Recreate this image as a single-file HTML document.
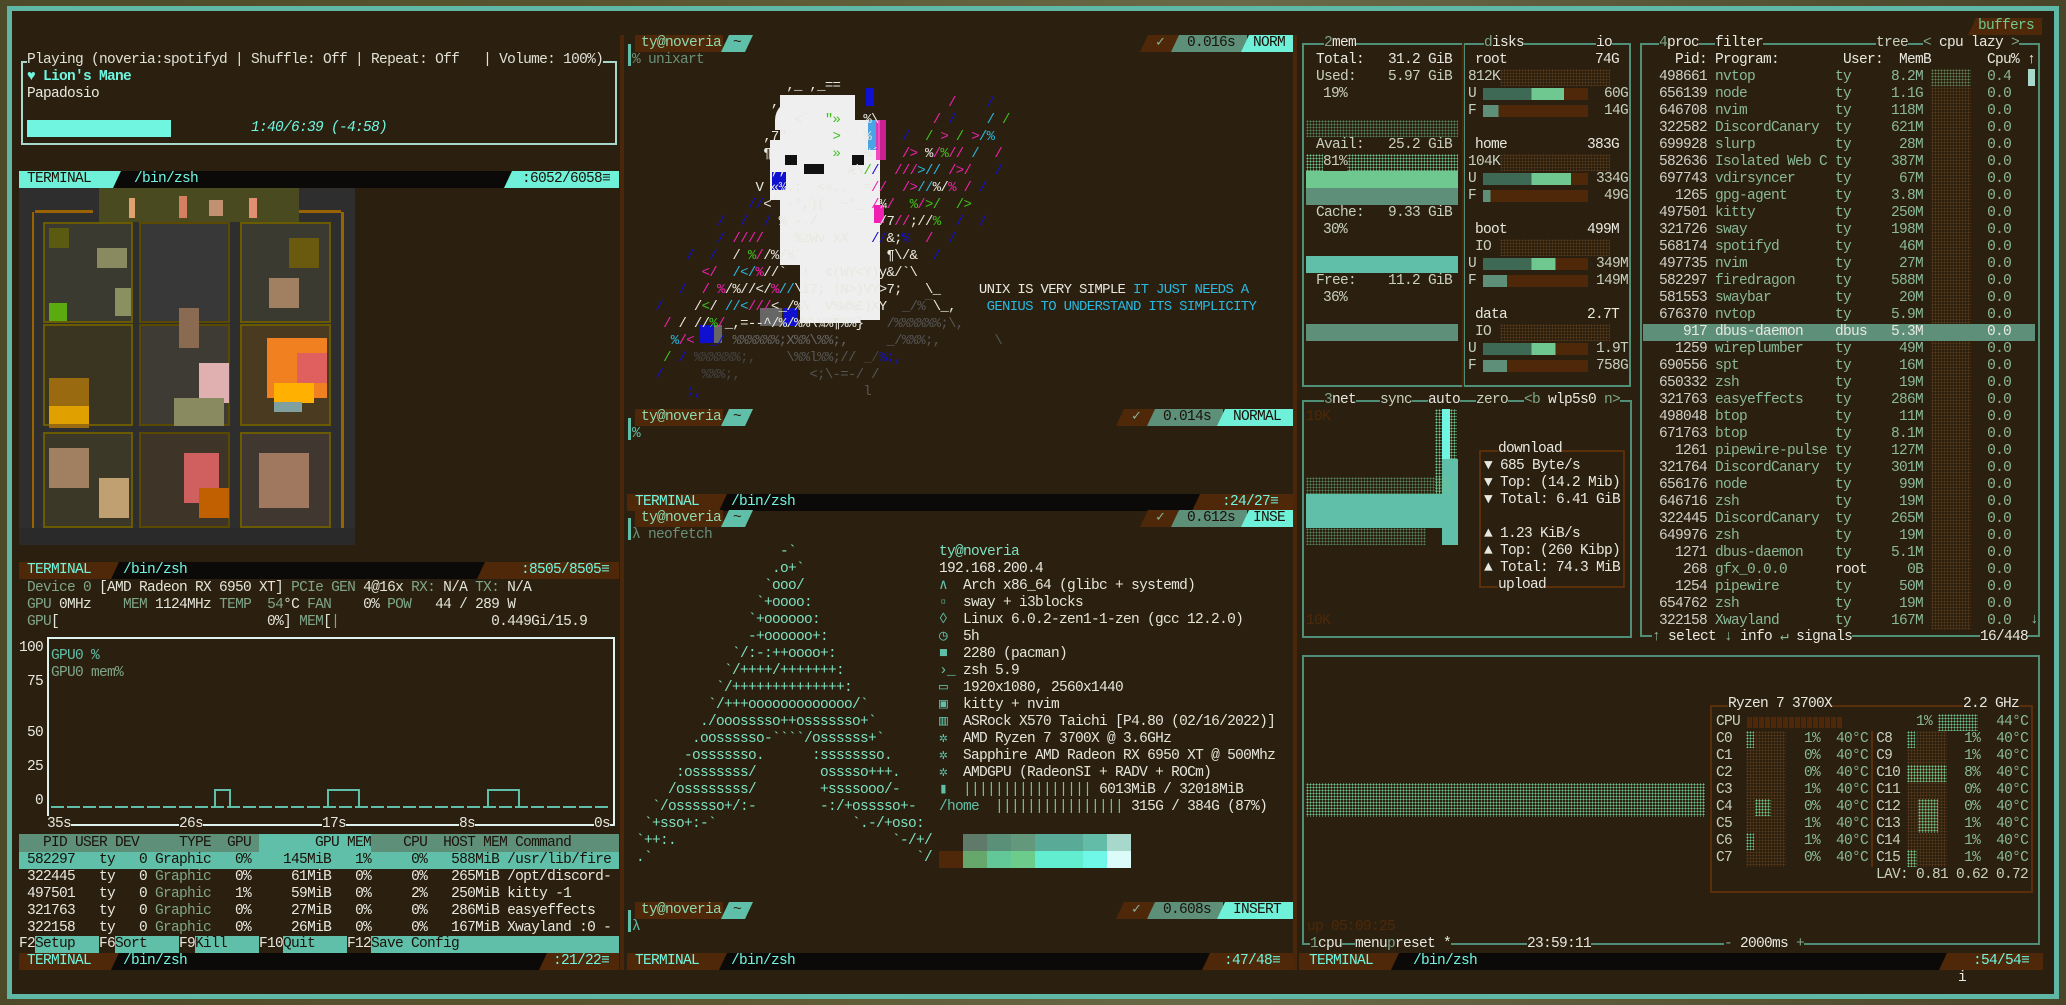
<!DOCTYPE html>
<html><head><meta charset="utf-8"><style>
*{margin:0;padding:0;box-sizing:border-box}
body{width:2066px;height:1005px;overflow:hidden;background:linear-gradient(90deg,#4d4a2a,#5a5530 30%,#6a6a48 60%,#4a4428);position:relative;font-family:"Liberation Mono","DejaVu Sans Mono",monospace}
#fr{position:absolute;left:7px;top:6px;width:2052px;height:993px;border:5px solid #5fb8a6;background:#2b200f}
.a{position:absolute}
.t{position:absolute;white-space:pre;font-size:14.5px;line-height:17px;letter-spacing:-0.7px;color:#e4e4da}
.w{color:#e8e8e0}.aq{color:#6ff5e0}.tl{color:#5fbfa8}.dg{color:#7fa58a}.gr{color:#8ab89a}.bk{color:#1a1208}
.bar{position:absolute;height:17px}
.seg{position:absolute;top:0;height:17px;white-space:pre;font-size:14.5px;line-height:17px;letter-spacing:-0.7px}
.dot{background-image:radial-gradient(circle,#6fc890 0.8px,transparent 1px);background-size:3px 3px}
.dotb{background-image:radial-gradient(circle,#5a3a18 0.8px,transparent 1px);background-size:3px 3px}
.box{position:absolute;border:2px solid #4f8f78}
.fk{position:absolute;top:936px;height:17px;background:#5fbfa8}
</style></head><body>
<div id="fr"></div>

<div class="a" style="left:620px;top:35px;width:4px;height:935px;background:#4a260a"></div>
<div class="a" style="left:1293px;top:35px;width:4px;height:935px;background:#4a260a"></div>

<!-- ===== LEFT COLUMN ===== -->
<div class="a" style="left:21px;top:61px;width:596px;height:84px;border:2px solid #a8d8cc"></div>
<div class="t" style="left:27px;top:52px;background:#2b200f;color:#e0e0d6">Playing (noveria:spotifyd | Shuffle: Off | Repeat: Off   | Volume: 100%)</div>
<div class="t aq" style="left:27px;top:69px;font-weight:bold">♥ Lion's Mane</div>
<div class="t w" style="left:27px;top:86px">Papadosio</div>
<div class="a" style="left:27px;top:120px;width:144px;height:17px;background:#6ff5e0"></div>
<div class="t aq" style="left:251px;top:120px;font-style:italic">1:40/6:39 (-4:58)</div>

<div class="bar" style="left:19px;top:171px;width:600px;background:#0b0a08">
 <div class="seg" style="left:0;width:102px;background:#6ff0d8;color:#1a1208;clip-path:polygon(0 0,100% 0,calc(100% - 8px) 100%,0 100%);padding-left:8px">TERMINAL</div>
 <div class="seg aq" style="left:115px">/bin/zsh</div>
 <div class="seg" style="left:485px;width:115px;background:#6ff0d8;color:#1a1208;clip-path:polygon(8px 0,100% 0,100% 100%,0 100%);padding-left:18px">:6052/6058≡</div>
</div>

<div class="a" style="left:19px;top:188px;width:336px;height:357px;background:#2e2e2e;overflow:hidden">
 <div class="a" style="left:13px;top:24px;width:2px;height:330px;background:#9a6200"></div>
 <div class="a" style="left:322px;top:24px;width:3px;height:330px;background:#9a6200"></div>
 <div class="a" style="left:16px;top:22px;width:58px;height:3px;background:#9a6200"></div>
 <div class="a" style="left:280px;top:22px;width:42px;height:3px;background:#9a6200"></div>
 <div class="a" style="left:80px;top:0;width:200px;height:34px;background:#4a4a20"></div>
 <div class="a" style="left:110px;top:10px;width:6px;height:20px;background:#e0a070"></div>
 <div class="a" style="left:160px;top:8px;width:8px;height:22px;background:#d48060"></div>
 <div class="a" style="left:190px;top:12px;width:14px;height:16px;background:#c09070"></div>
 <div class="a" style="left:230px;top:10px;width:8px;height:20px;background:#e09070"></div>
 <div class="a" style="left:24px;top:34px;width:90px;height:101px;background:#3a3a30;border:2px solid #6a5a00"></div>
 <div class="a" style="left:120px;top:34px;width:91px;height:101px;background:#383838;border:2px solid #5a4a00"></div>
 <div class="a" style="left:221px;top:34px;width:91px;height:101px;background:#3a3a30;border:2px solid #6a5a00"></div>
 <div class="a" style="left:24px;top:136px;width:90px;height:102px;background:#3a3520;border:2px solid #6a5a00"></div>
 <div class="a" style="left:120px;top:136px;width:91px;height:102px;background:#3e3a34;border:2px solid #5a4a00"></div>
 <div class="a" style="left:221px;top:136px;width:91px;height:102px;background:#4a3a20;border:2px solid #6a5a00"></div>
 <div class="a" style="left:24px;top:244px;width:90px;height:96px;background:#3c3828;border:2px solid #6a5a00"></div>
 <div class="a" style="left:120px;top:244px;width:91px;height:96px;background:#3e3428;border:2px solid #5a4a00"></div>
 <div class="a" style="left:221px;top:244px;width:91px;height:96px;background:#403830;border:2px solid #6a5a00"></div>
 <div class="a" style="left:30px;top:40px;width:20px;height:20px;background:#5a5a10"></div>
 <div class="a" style="left:78px;top:60px;width:30px;height:20px;background:#8a8a60"></div>
 <div class="a" style="left:96px;top:100px;width:16px;height:28px;background:#8a9060"></div>
 <div class="a" style="left:30px;top:115px;width:18px;height:18px;background:#5aaa10"></div>
 <div class="a" style="left:160px;top:120px;width:20px;height:40px;background:#8a6a50"></div>
 <div class="a" style="left:270px;top:50px;width:30px;height:30px;background:#6a5a10"></div>
 <div class="a" style="left:250px;top:90px;width:30px;height:30px;background:#a08060"></div>
 <div class="a" style="left:30px;top:190px;width:40px;height:50px;background:#9a6a10"></div>
 <div class="a" style="left:30px;top:218px;width:40px;height:18px;background:#e0a000"></div>
 <div class="a" style="left:180px;top:175px;width:30px;height:40px;background:#e0b0b0"></div>
 <div class="a" style="left:155px;top:210px;width:50px;height:28px;background:#8a8a60"></div>
 <div class="a" style="left:248px;top:150px;width:60px;height:60px;background:#f08020"></div>
 <div class="a" style="left:278px;top:165px;width:30px;height:30px;background:#e06060"></div>
 <div class="a" style="left:255px;top:195px;width:40px;height:20px;background:#ffb000"></div>
 <div class="a" style="left:255px;top:214px;width:28px;height:10px;background:#80a0a0"></div>
 <div class="a" style="left:30px;top:260px;width:40px;height:40px;background:#a08060"></div>
 <div class="a" style="left:80px;top:290px;width:30px;height:40px;background:#c0a070"></div>
 <div class="a" style="left:165px;top:265px;width:35px;height:50px;background:#d06060"></div>
 <div class="a" style="left:180px;top:300px;width:30px;height:30px;background:#c06000"></div>
 <div class="a" style="left:240px;top:265px;width:50px;height:55px;background:#a07860"></div>
 <div class="a" style="left:0;top:340px;width:336px;height:17px;background:#2a2a2a"></div>
</div>

<div class="bar" style="left:19px;top:562px;width:600px;background:#0b0a08">
 <div class="seg aq" style="left:0;width:100px;background:#4e2808;clip-path:polygon(0 0,100% 0,calc(100% - 8px) 100%,0 100%);padding-left:8px">TERMINAL</div>
 <div class="seg aq" style="left:104px">/bin/zsh</div>
 <div class="seg aq" style="left:458px;width:142px;background:#4e2808;clip-path:polygon(8px 0,100% 0,100% 100%,0 100%);padding-left:44px">:8505/8505≡</div>
</div>
<div class="t" style="left:27px;top:580px"><span class="dg">Device 0</span> [AMD Radeon RX 6950 XT] <span class="dg">PCIe GEN</span> 4@16x <span class="dg">RX:</span> N/A <span class="dg">TX:</span> N/A</div>
<div class="t" style="left:27px;top:597px"><span class="dg">GPU</span> 0MHz    <span class="dg">MEM</span> 1124MHz <span class="dg">TEMP</span>  <span class="dg">54</span>°C <span class="dg">FAN</span>    0% <span class="dg">POW</span>   44 / 289 W</div>
<div class="t" style="left:27px;top:614px"><span class="dg">GPU</span>[                          0%] <span class="dg">MEM</span>[<span class="dg">|</span>                   0.449Gi/15.9</div>

<div class="a" style="left:47px;top:637px;width:568px;height:189px;border:2px solid #dff3ee;border-bottom:none"></div>
<div class="t w" style="left:19px;top:640px">100</div>
<div class="t w" style="left:27px;top:674px">75</div>
<div class="t w" style="left:27px;top:725px">50</div>
<div class="t w" style="left:27px;top:759px">25</div>
<div class="t w" style="left:35px;top:793px">0</div>
<div class="t tl" style="left:51px;top:648px">GPU0 %</div>
<div class="t dg" style="left:51px;top:665px">GPU0 mem%</div>
<div class="a" style="left:51px;top:806px;width:560px;height:2px;background:repeating-linear-gradient(90deg,#5fbfa8 0 13px,transparent 13px 16px)"></div>
<div class="a" style="left:214px;top:789px;width:17px;height:18px;border:2px solid #5fbfa8;border-bottom:none"></div>
<div class="a" style="left:327px;top:789px;width:33px;height:18px;border:2px solid #5fbfa8;border-bottom:none"></div>
<div class="a" style="left:487px;top:789px;width:33px;height:18px;border:2px solid #5fbfa8;border-bottom:none"></div>
<div class="a" style="left:47px;top:824px;width:568px;height:2px;background:#dff3ee"></div>
<div class="t w" style="left:47px;top:816px;background:#2b200f">35s</div>
<div class="t w" style="left:179px;top:816px;background:#2b200f">26s</div>
<div class="t w" style="left:322px;top:816px;background:#2b200f">17s</div>
<div class="t w" style="left:459px;top:816px;background:#2b200f">8s</div>
<div class="t w" style="left:594px;top:816px;background:#2b200f">0s</div>

<div class="a" style="left:19px;top:834px;width:600px;height:18px;background:#5e8f78"></div>
<div class="a" style="left:259px;top:834px;width:112px;height:18px;background:#5fbfa8"></div>
<div class="t bk" style="left:19px;top:835px">   PID USER DEV     TYPE  GPU        GPU MEM    CPU  HOST MEM Command</div>
<div class="a" style="left:19px;top:852px;width:600px;height:17px;background:#5fbfa8"></div>
<div class="t bk" style="left:19px;top:852px"> 582297   ty   0 Graphic   0%    145MiB   1%     0%   588MiB /usr/lib/fire</div>
<div class="t w" style="left:19px;top:869px"> 322445   ty   0 <span class="dg">Graphic</span>   0%     61MiB   0%     0%   265MiB /opt/discord-</div>
<div class="t w" style="left:19px;top:886px"> 497501   ty   0 <span class="dg">Graphic</span>   1%     59MiB   0%     2%   250MiB kitty -1</div>
<div class="t w" style="left:19px;top:903px"> 321763   ty   0 <span class="dg">Graphic</span>   0%     27MiB   0%     0%   286MiB easyeffects</div>
<div class="t w" style="left:19px;top:920px"> 322158   ty   0 <span class="dg">Graphic</span>   0%     26MiB   0%     0%   167MiB Xwayland :0 -</div>
<div class="fk" style="left:35px;width:64px"></div>
<div class="fk" style="left:115px;width:64px"></div>
<div class="fk" style="left:195px;width:64px"></div>
<div class="fk" style="left:283px;width:64px"></div>
<div class="fk" style="left:371px;width:248px"></div>
<div class="t w" style="left:19px;top:936px">F2</div><div class="t bk" style="left:35px;top:936px">Setup</div>
<div class="t w" style="left:99px;top:936px">F6</div><div class="t bk" style="left:115px;top:936px">Sort</div>
<div class="t w" style="left:179px;top:936px">F9</div><div class="t bk" style="left:195px;top:936px">Kill</div>
<div class="t w" style="left:259px;top:936px">F10</div><div class="t bk" style="left:283px;top:936px">Quit</div>
<div class="t w" style="left:347px;top:936px">F12</div><div class="t bk" style="left:371px;top:936px">Save Config</div>
<div class="bar" style="left:19px;top:953px;width:600px;background:#0b0a08">
 <div class="seg aq" style="left:0;width:100px;background:#4e2808;clip-path:polygon(0 0,100% 0,calc(100% - 8px) 100%,0 100%);padding-left:8px">TERMINAL</div>
 <div class="seg aq" style="left:104px">/bin/zsh</div>
 <div class="seg aq" style="left:520px;width:80px;background:#4e2808;clip-path:polygon(8px 0,100% 0,100% 100%,0 100%);padding-left:14px">:21/22≡</div>
</div>

<!-- ===== MIDDLE ===== -->
<div class="a" style="left:628px;top:44px;width:3px;height:22px;background:#5fbfa8"></div>
<div class="bar" style="left:635px;top:35px;width:120px">
 <div class="seg" style="left:0;width:88px;background:#4e2808;color:#8fd9b0;padding-left:6px">ty@noveria</div>
 <div class="seg" style="left:86px;width:32px;background:#5fbfa8;color:#2b200f;clip-path:polygon(8px 0,100% 0,calc(100% - 8px) 100%,0 100%);padding-left:12px">~</div>
</div>
<div class="bar" style="left:1140px;top:35px;width:153px">
 <div class="seg" style="left:0;width:38px;background:#4e2808;color:#8ab89a;clip-path:polygon(8px 0,100% 0,100% 100%,0 100%);padding-left:16px">✓</div>
 <div class="seg" style="left:31px;width:76px;background:#5e8f78;color:#1a1208;clip-path:polygon(8px 0,100% 0,100% 100%,0 100%);padding-left:16px">0.016s</div>
 <div class="seg" style="left:101px;width:52px;background:#6ff0d8;color:#1a1208;clip-path:polygon(8px 0,100% 0,100% 100%,0 100%);padding-left:12px">NORM</div>
</div>
<div class="t" style="left:632px;top:52px;color:#6a8f78">% unixart</div>

<div class="a" style="left:775px;top:100px;width:60px;height:30px;background:#eee;border-radius:20px 20px 0 0"></div>
<div class="a" style="left:780px;top:95px;width:75px;height:170px;background:#efefef"></div>
<div class="a" style="left:770px;top:140px;width:20px;height:60px;background:#efefef"></div>
<div class="a" style="left:855px;top:120px;width:25px;height:200px;background:#efefef"></div>
<div class="a" style="left:800px;top:265px;width:60px;height:58px;background:#efefef"></div>
<div class="a" style="left:785px;top:155px;width:12px;height:10px;background:#111"></div>
<div class="a" style="left:804px;top:164px;width:20px;height:10px;background:#111"></div>
<div class="a" style="left:852px;top:155px;width:12px;height:10px;background:#111"></div>
<div class="a" style="left:772px;top:172px;width:14px;height:18px;background:#1010d0"></div>
<div class="a" style="left:866px;top:88px;width:8px;height:18px;background:#1010d0"></div>
<div class="a" style="left:868px;top:120px;width:10px;height:30px;background:#2090e0;opacity:.8"></div>
<div class="a" style="left:876px;top:120px;width:10px;height:40px;background:#f020b0;opacity:.8"></div>
<div class="a" style="left:874px;top:205px;width:10px;height:18px;background:#f020b0"></div>
<div class="a" style="left:760px;top:308px;width:22px;height:18px;background:#666"></div>
<div class="a" style="left:783px;top:308px;width:14px;height:18px;background:#1010d0"></div>
<div class="a" style="left:700px;top:325px;width:14px;height:18px;background:#1010d0"></div>
<div class="a" style="left:714px;top:325px;width:8px;height:18px;background:#666"></div>
<div class="t" style="left:640px;top:78px;font-size:14px;line-height:17px"><span class="w">                   ,_ ,_==</span>
<span class="w">                 ,                      </span><span style="color:#f020b0">/</span>    <span style="color:#1010d0">/</span>
<span class="w">                    &lt;´  </span><span style="color:#40c020">"»</span><span class="w">   %\</span>       <span style="color:#f020b0">/</span> <span style="color:#1010d0">/</span>    <span style="color:#29b8e0">/</span> <span style="color:#40c020">/</span>
<span class="w">                ,7"      </span><span style="color:#40c020">&gt;</span><span class="w">   %</span>    <span style="color:#1010d0">/</span>  <span style="color:#40c020">/</span> <span style="color:#f020b0">&gt;</span> <span style="color:#40c020">/</span> <span style="color:#f020b0">&gt;</span><span style="color:#29b8e0">/%</span>
<span class="w">                ¶        </span><span style="color:#40c020">»</span><span class="w">   ¾´</span>   <span style="color:#f020b0">/&gt;</span> <span class="w">%</span><span style="color:#f020b0">/</span><span style="color:#40c020">%</span><span style="color:#f020b0">//</span> <span style="color:#29b8e0">/</span>  <span style="color:#f020b0">/</span>
<span class="w">                 ,,      </span><span class="w">  Æ\</span><span style="color:#40c020">/</span><span style="color:#1010d0">/</span>  <span style="color:#f020b0">///</span><span style="color:#29b8e0">&gt;//</span> <span style="color:#f020b0">/&gt;/</span>   <span style="color:#1010d0">/</span>
<span class="w">               V «¾.;  &lt;«.,  =</span><span style="color:#f020b0">//</span>  <span style="color:#f020b0">/&gt;</span><span style="color:#29b8e0">//</span><span class="w">%/</span><span style="color:#f020b0">%</span> <span style="color:#f020b0">/</span> <span style="color:#1010d0">/</span>
<span style="color:#1010d0">              //</span><span class="w">&lt;´ -²,)(  ~"_ </span><span style="color:#f020b0">/</span><span class="w">¾</span><span style="color:#f020b0">/</span>  <span style="color:#40c020">%</span><span style="color:#f020b0">/</span><span style="color:#40c020">&gt;/</span>  <span style="color:#40c020">/&gt;</span>
<span style="color:#1010d0">          /  /  /</span><span class="w"> % -./        /7</span><span style="color:#f020b0">//</span><span class="w">;//</span><span style="color:#40c020">%</span>  <span style="color:#1010d0">/</span>  <span style="color:#1010d0">/</span>
<span style="color:#1010d0">          /</span> <span style="color:#f020b0">////</span><span class="w">    %zWv xX   </span><span style="color:#1010d0">//</span><span class="w">&amp;;</span><span style="color:#1010d0">%</span>  <span style="color:#f020b0">/</span>  <span style="color:#1010d0">/</span>
<span style="color:#1010d0">      /  /</span><span class="w">  /</span> <span style="color:#40c020">%</span><span style="color:#f020b0">/</span><span class="w">/%/¾´           ¶\/&amp;</span>  <span style="color:#1010d0">/</span>
<span style="color:#f020b0">        &lt;/</span>  <span style="color:#29b8e0">/&lt;/</span><span style="color:#f020b0">%</span><span class="w">//&#96;  !  ¢(WY&lt;Y)y&amp;/&#96;\</span>
<span style="color:#1010d0">     /</span>  <span style="color:#f020b0">/</span> <span style="color:#f020b0">%</span><span class="w">/%//&lt;/</span><span style="color:#f020b0">%</span><span style="color:#29b8e0">//</span><span class="w">\i7; |N&gt;)VY&gt;7;   \_</span>     <span class="w">UNIX IS VERY SIMPLE </span><span style="color:#29b8e0">IT JUST NEEDS A</span>
<span style="color:#1010d0">  /</span>    <span class="w">/</span><span style="color:#40c020">&lt;</span><span class="w">/</span> <span style="color:#29b8e0">//&lt;</span><span style="color:#f020b0">///</span><span class="w">&lt;_/%\  V%W%£)XY</span>  <span style="color:#555">_/%¯</span><span class="w">\_,</span>    <span style="color:#29b8e0">GENIUS TO UNDERSTAND ITS SIMPLICITY</span>
<span style="color:#f020b0">   /</span> <span class="w">/</span> <span class="w">//</span><span style="color:#40c020">%</span><span style="color:#f020b0">/</span><span class="w">_,=--^/%/%%\¾%¶%%}</span>   <span style="color:#555">/%%%%%%;\,</span>
<span style="color:#29b8e0">    %</span><span style="color:#f020b0">/&lt;</span> <span style="color:#1010d0">/_/</span> <span style="color:#666">%%%%%%;X%%\%%;,</span>     <span style="color:#555">_/%%%;,</span>       <span style="color:#555">\</span>
<span style="color:#40c020">   /</span> <span style="color:#1010d0">/</span> <span style="color:#444">%%%%%%;,</span>    <span style="color:#555">\%%l%%;//</span> <span style="color:#444">_/</span><span style="color:#1010d0">%;,</span>
<span style="color:#1010d0">  /</span>     <span style="color:#444">%%%;,</span>         <span style="color:#555">&lt;;\-=-/ /</span>
<span style="color:#1010d0">      ;,</span>                     <span style="color:#555">l</span></div>

<div class="a" style="left:628px;top:418px;width:3px;height:22px;background:#5fbfa8"></div>
<div class="bar" style="left:635px;top:409px;width:120px">
 <div class="seg" style="left:0;width:88px;background:#4e2808;color:#8fd9b0;padding-left:6px">ty@noveria</div>
 <div class="seg" style="left:86px;width:32px;background:#5fbfa8;color:#2b200f;clip-path:polygon(8px 0,100% 0,calc(100% - 8px) 100%,0 100%);padding-left:12px">~</div>
</div>
<div class="bar" style="left:1116px;top:409px;width:177px">
 <div class="seg" style="left:0;width:38px;background:#4e2808;color:#8ab89a;clip-path:polygon(8px 0,100% 0,100% 100%,0 100%);padding-left:16px">✓</div>
 <div class="seg" style="left:31px;width:76px;background:#5e8f78;color:#1a1208;clip-path:polygon(8px 0,100% 0,100% 100%,0 100%);padding-left:16px">0.014s</div>
 <div class="seg" style="left:101px;width:76px;background:#6ff0d8;color:#1a1208;clip-path:polygon(8px 0,100% 0,100% 100%,0 100%);padding-left:16px">NORMAL</div>
</div>
<div class="t tl" style="left:632px;top:426px">%</div>

<div class="bar" style="left:627px;top:494px;width:666px;background:#0b0a08">
 <div class="seg aq" style="left:0;width:100px;background:#4e2808;clip-path:polygon(0 0,100% 0,calc(100% - 8px) 100%,0 100%);padding-left:8px">TERMINAL</div>
 <div class="seg aq" style="left:104px">/bin/zsh</div>
 <div class="seg aq" style="left:565px;width:101px;background:#4e2808;clip-path:polygon(8px 0,100% 0,100% 100%,0 100%);padding-left:30px">:24/27≡</div>
</div>

<div class="a" style="left:628px;top:518px;width:3px;height:22px;background:#5fbfa8"></div>
<div class="bar" style="left:635px;top:510px;width:120px">
 <div class="seg" style="left:0;width:88px;background:#4e2808;color:#8fd9b0;padding-left:6px">ty@noveria</div>
 <div class="seg" style="left:86px;width:32px;background:#5fbfa8;color:#2b200f;clip-path:polygon(8px 0,100% 0,calc(100% - 8px) 100%,0 100%);padding-left:12px">~</div>
</div>
<div class="bar" style="left:1140px;top:510px;width:153px">
 <div class="seg" style="left:0;width:38px;background:#4e2808;color:#8ab89a;clip-path:polygon(8px 0,100% 0,100% 100%,0 100%);padding-left:16px">✓</div>
 <div class="seg" style="left:31px;width:76px;background:#5e8f78;color:#1a1208;clip-path:polygon(8px 0,100% 0,100% 100%,0 100%);padding-left:16px">0.612s</div>
 <div class="seg" style="left:101px;width:52px;background:#6ff0d8;color:#1a1208;clip-path:polygon(8px 0,100% 0,100% 100%,0 100%);padding-left:12px">INSE</div>
</div>
<div class="t" style="left:632px;top:527px;color:#6a8f78">λ neofetch</div>

<div class="t" style="left:628px;top:544px;color:#7ee0c0">                   -&#96;
                  .o+&#96;
                 &#96;ooo/
                &#96;+oooo:
               &#96;+oooooo:
               -+oooooo+:
             &#96;/:-:++oooo+:
            &#96;/++++/+++++++:
           &#96;/++++++++++++++:
          &#96;/+++ooooooooooooo/&#96;
         ./ooosssso++osssssso+&#96;
        .oossssso-&#96;&#96;&#96;&#96;/ossssss+&#96;
       -osssssso.      :ssssssso.
      :osssssss/        osssso+++.
     /ossssssss/        +ssssooo/-
   &#96;/ossssso+/:-        -:/+osssso+-
  &#96;+sso+:-&#96;                 &#96;.-/+oso:
 &#96;++:.                           &#96;-/+/
 .&#96;                                 &#96;/</div>
<div class="t" style="left:939px;top:544px;line-height:17px"><span style="color:#7ee0c0">ty@noveria</span>
<span class="w">192.168.200.4</span>
<span class="tl">∧</span>  Arch x86_64 (glibc + systemd)
<span class="tl">▫</span>  sway + i3blocks
<span class="tl">◊</span>  Linux 6.0.2-zen1-1-zen (gcc 12.2.0)
<span class="tl">◷</span>  5h
<span class="tl">■</span>  2280 (pacman)
<span class="tl">›_</span> zsh 5.9
<span class="tl">▭</span>  1920x1080, 2560x1440
<span class="tl">▣</span>  kitty + nvim
<span class="tl">▥</span>  ASRock X570 Taichi [P4.80 (02/16/2022)]
<span class="tl">✲</span>  AMD Ryzen 7 3700X @ 3.6GHz
<span class="tl">✲</span>  Sapphire AMD Radeon RX 6950 XT @ 500Mhz
<span class="tl">✲</span>  AMDGPU (RadeonSI + RADV + ROCm)
<span class="tl">▮</span>  <span style="color:#6fc890">||||||||||||||||</span> 6013MiB / 32018MiB
<span class="tl">/home</span>  <span style="color:#6fc890">||||||||||||||||</span> 315G / 384G (87%)</div>
<div class="a" style="left:963px;top:834px;width:24px;height:17px;background:#5f7a68"></div>
<div class="a" style="left:987px;top:834px;width:24px;height:17px;background:#5a9078"></div>
<div class="a" style="left:1011px;top:834px;width:24px;height:17px;background:#64987c"></div>
<div class="a" style="left:1035px;top:834px;width:48px;height:17px;background:#5aaa98"></div>
<div class="a" style="left:1083px;top:834px;width:24px;height:17px;background:#62bca8"></div>
<div class="a" style="left:1107px;top:834px;width:24px;height:17px;background:#a8d8cc"></div>
<div class="a" style="left:939px;top:851px;width:24px;height:17px;background:#4e2808"></div>
<div class="a" style="left:963px;top:851px;width:24px;height:17px;background:#66a86c"></div>
<div class="a" style="left:987px;top:851px;width:24px;height:17px;background:#62c898"></div>
<div class="a" style="left:1011px;top:851px;width:24px;height:17px;background:#6ccc8c"></div>
<div class="a" style="left:1035px;top:851px;width:48px;height:17px;background:#62ecd0"></div>
<div class="a" style="left:1083px;top:851px;width:24px;height:17px;background:#6ff8e8"></div>
<div class="a" style="left:1107px;top:851px;width:24px;height:17px;background:#dcfcfa"></div>

<div class="a" style="left:628px;top:910px;width:3px;height:22px;background:#5fbfa8"></div>
<div class="bar" style="left:635px;top:902px;width:120px">
 <div class="seg" style="left:0;width:88px;background:#4e2808;color:#8fd9b0;padding-left:6px">ty@noveria</div>
 <div class="seg" style="left:86px;width:32px;background:#5fbfa8;color:#2b200f;clip-path:polygon(8px 0,100% 0,calc(100% - 8px) 100%,0 100%);padding-left:12px">~</div>
</div>
<div class="bar" style="left:1116px;top:902px;width:177px">
 <div class="seg" style="left:0;width:38px;background:#4e2808;color:#8ab89a;clip-path:polygon(8px 0,100% 0,100% 100%,0 100%);padding-left:16px">✓</div>
 <div class="seg" style="left:31px;width:76px;background:#5e8f78;color:#1a1208;clip-path:polygon(8px 0,100% 0,100% 100%,0 100%);padding-left:16px">0.608s</div>
 <div class="seg" style="left:101px;width:76px;background:#6ff0d8;color:#1a1208;clip-path:polygon(8px 0,100% 0,100% 100%,0 100%);padding-left:16px">INSERT</div>
</div>
<div class="t tl" style="left:632px;top:919px">λ</div>
<div class="bar" style="left:627px;top:953px;width:666px;background:#0b0a08">
 <div class="seg aq" style="left:0;width:100px;background:#4e2808;clip-path:polygon(0 0,100% 0,calc(100% - 8px) 100%,0 100%);padding-left:8px">TERMINAL</div>
 <div class="seg aq" style="left:104px">/bin/zsh</div>
 <div class="seg aq" style="left:575px;width:91px;background:#4e2808;clip-path:polygon(8px 0,100% 0,100% 100%,0 100%);padding-left:22px">:47/48≡</div>
</div>

<!-- ===== RIGHT (btop) ===== -->
<div class="a" style="left:1968px;top:18px;width:74px;height:17px;background:#4e2808;clip-path:polygon(8px 0,100% 0,100% 100%,0 100%)"></div>
<div class="t" style="left:1978px;top:18px;color:#6fc890">buffers</div>

<div class="box" style="left:1302px;top:43px;width:162px;height:344px;border-right:none"></div>
<div class="box" style="left:1463px;top:43px;width:168px;height:344px"></div>
<div class="a" style="left:1462px;top:43px;width:2px;height:344px;background:#4a260a"></div>
<div class="t w" style="left:1324px;top:35px;background:#2b200f"><span class="dg">2</span>mem</div>
<div class="t w" style="left:1484px;top:35px;background:#2b200f"><span class="dg">d</span>isks</div>
<div class="t w" style="left:1596px;top:35px;background:#2b200f">io</div>
<div class="t w" style="left:1316px;top:52px">Total:   31.2 GiB</div>
<div class="t" style="left:1316px;top:69px;color:#c8d0c0">Used:    5.97 GiB</div>
<div class="t" style="left:1323px;top:86px;color:#c8d0c0">19%</div>
<div class="a dot" style="left:1306px;top:120px;width:152px;height:17px;opacity:.6"></div>
<div class="t" style="left:1316px;top:137px;color:#c8d0c0">Avail:   25.2 GiB</div>
<div class="a dot" style="left:1306px;top:154px;width:152px;height:17px"></div>
<div class="t" style="left:1323px;top:154px;color:#c8d0c0;background:#2b200f">81%</div>
<div class="a" style="left:1306px;top:171px;width:152px;height:17px;background:#6fc890"></div>
<div class="a" style="left:1306px;top:188px;width:152px;height:17px;background:#5e8f78"></div>
<div class="t" style="left:1316px;top:205px;color:#c8d0c0">Cache:   9.33 GiB</div>
<div class="t" style="left:1323px;top:222px;color:#c8d0c0">30%</div>
<div class="a" style="left:1306px;top:256px;width:152px;height:17px;background:#5fbfa8"></div>
<div class="t" style="left:1316px;top:273px;color:#c8d0c0">Free:    11.2 GiB</div>
<div class="t" style="left:1323px;top:290px;color:#c8d0c0">36%</div>
<div class="a" style="left:1306px;top:324px;width:152px;height:17px;background:#5e8f78"></div>

<div class="t w" style="left:1475px;top:52px">root           74G</div>
<div class="t" style="left:1468px;top:69px;color:#c8d0c0">812K</div>
<div class="t w" style="left:1475px;top:137px">home          383G</div>
<div class="t" style="left:1468px;top:154px;color:#c8d0c0">104K</div>
<div class="t w" style="left:1475px;top:222px">boot          499M</div>
<div class="t" style="left:1475px;top:239px;color:#c8d0c0">IO</div>
<div class="t w" style="left:1475px;top:307px">data          2.7T</div>
<div class="t" style="left:1475px;top:324px;color:#c8d0c0">IO</div>
<div class="a dotb" style="left:1500px;top:69px;width:110px;height:17px"></div>
<div class="a dotb" style="left:1500px;top:154px;width:110px;height:17px"></div>
<div class="a dotb" style="left:1500px;top:239px;width:110px;height:17px"></div>
<div class="a dotb" style="left:1500px;top:324px;width:110px;height:17px"></div>
<div class="t" style="left:1468px;top:86px;color:#c8d0c0">U                60G
F                14G</div>
<div class="t" style="left:1468px;top:171px;color:#c8d0c0">U               334G
F                49G</div>
<div class="t" style="left:1468px;top:256px;color:#c8d0c0">U               349M
F               149M</div>
<div class="t" style="left:1468px;top:341px;color:#c8d0c0">U               1.9T
F               758G</div>
<div class="a" style="left:1483px;top:88px;width:105px;height:12px;background:linear-gradient(90deg,#3e6a55 0 46%,#6fc890 46% 77%,#4e2808 77%)"></div>
<div class="a" style="left:1483px;top:105px;width:105px;height:12px;background:linear-gradient(90deg,#5e8f78 0 15%,#4e2808 15%)"></div>
<div class="a" style="left:1483px;top:173px;width:105px;height:12px;background:linear-gradient(90deg,#3e6a55 0 46%,#6fc890 46% 84%,#4e2808 84%)"></div>
<div class="a" style="left:1483px;top:190px;width:105px;height:12px;background:linear-gradient(90deg,#5e8f78 0 7%,#4e2808 7%)"></div>
<div class="a" style="left:1483px;top:258px;width:105px;height:12px;background:linear-gradient(90deg,#3e6a55 0 46%,#6fc890 46% 69%,#4e2808 69%)"></div>
<div class="a" style="left:1483px;top:275px;width:105px;height:12px;background:linear-gradient(90deg,#5e8f78 0 23%,#4e2808 23%)"></div>
<div class="a" style="left:1483px;top:343px;width:105px;height:12px;background:linear-gradient(90deg,#3e6a55 0 46%,#6fc890 46% 69%,#4e2808 69%)"></div>
<div class="a" style="left:1483px;top:360px;width:105px;height:12px;background:linear-gradient(90deg,#5e8f78 0 23%,#4e2808 23%)"></div>

<!-- proc -->
<div class="box" style="left:1640px;top:43px;width:400px;height:594px"></div>
<div class="t w" style="left:1659px;top:35px;background:#2b200f"><span class="dg">4</span>proc</div>
<div class="t w" style="left:1715px;top:35px;background:#2b200f">filter</div>
<div class="t" style="left:1876px;top:35px;background:#2b200f;color:#c8d0c0">tree</div>
<div class="t w" style="left:1923px;top:35px;background:#2b200f"><span class="dg">&lt;</span> cpu lazy <span class="dg">&gt;</span></div>
<div class="t w" style="left:1659px;top:52px">  Pid: Program:        User:  MemB       Cpu% ↑</div>
<div class="a dotb" style="left:1931px;top:69px;width:40px;height:561px"></div>
<div class="a dot" style="left:1931px;top:69px;width:40px;height:17px;opacity:.5"></div>
<div class="a" style="left:2028px;top:69px;width:7px;height:17px;background:#a8d8cc"></div>
<div class="a" style="left:1643px;top:324px;width:392px;height:17px;background:#5e8f78"></div>
<div class="t" style="left:1659px;top:69px;color:#d0d0c8">498661 <span class="gr">nvtop          ty     8.2M        0.4</span>
656139 <span class="gr">node           ty     1.1G        0.0</span>
646708 <span class="gr">nvim           ty     118M        0.0</span>
322582 <span class="gr">DiscordCanary  ty     621M        0.0</span>
699928 <span class="gr">slurp          ty      28M        0.0</span>
582636 <span class="gr">Isolated Web C ty     387M        0.0</span>
697743 <span class="gr">vdirsyncer     ty      67M        0.0</span>
  1265 <span class="gr">gpg-agent      ty     3.8M        0.0</span>
497501 <span class="gr">kitty          ty     250M        0.0</span>
321726 <span class="gr">sway           ty     198M        0.0</span>
568174 <span class="gr">spotifyd       ty      46M        0.0</span>
497735 <span class="gr">nvim           ty      27M        0.0</span>
582297 <span class="gr">firedragon     ty     588M        0.0</span>
581553 <span class="gr">swaybar        ty      20M        0.0</span>
676370 <span class="gr">nvtop          ty     5.9M        0.0</span>
<span class="w">   917 dbus-daemon    dbus   5.3M        0.0</span>
  1259 <span class="gr">wireplumber    ty      49M        0.0</span>
690556 <span class="gr">spt            ty      16M        0.0</span>
650332 <span class="gr">zsh            ty      19M        0.0</span>
321763 <span class="gr">easyeffects    ty     286M        0.0</span>
498048 <span class="gr">btop           ty      11M        0.0</span>
671763 <span class="gr">btop           ty     8.1M        0.0</span>
  1261 <span class="gr">pipewire-pulse ty     127M        0.0</span>
321764 <span class="gr">DiscordCanary  ty     301M        0.0</span>
656176 <span class="gr">node           ty      99M        0.0</span>
646716 <span class="gr">zsh            ty      19M        0.0</span>
322445 <span class="gr">DiscordCanary  ty     265M        0.0</span>
649976 <span class="gr">zsh            ty      19M        0.0</span>
  1271 <span class="gr">dbus-daemon    ty     5.1M        0.0</span>
   268 <span class="gr">gfx_0.0.0      </span><span class="w">root</span><span class="gr">     0B        0.0</span>
  1254 <span class="gr">pipewire       ty      50M        0.0</span>
654762 <span class="gr">zsh            ty      19M        0.0</span>
322158 <span class="gr">Xwayland       ty     167M        0.0</span></div>
<div class="t gr" style="left:2030px;top:612px">↓</div>
<div class="t w" style="left:1652px;top:629px;background:#2b200f"><span class="gr">↑</span> select <span class="gr">↓</span> info <span class="gr">↵</span> signals</div>
<div class="t w" style="left:1980px;top:629px;background:#2b200f">16/448</div>

<!-- net -->
<div class="box" style="left:1302px;top:400px;width:330px;height:238px"></div>
<div class="t w" style="left:1324px;top:392px;background:#2b200f"><span class="dg">3</span>net</div>
<div class="t" style="left:1380px;top:392px;background:#2b200f;color:#c8d0c0">sync</div>
<div class="t w" style="left:1428px;top:392px;background:#2b200f">auto</div>
<div class="t" style="left:1476px;top:392px;background:#2b200f;color:#c8d0c0">zero</div>
<div class="t w" style="left:1524px;top:392px;background:#2b200f"><span class="dg">&lt;b</span> wlp5s0 <span class="dg">n&gt;</span></div>
<div class="t" style="left:1306px;top:409px;color:#4e2808">10K</div>
<div class="t" style="left:1306px;top:613px;color:#4e2808">10K</div>
<div class="a dot" style="left:1435px;top:409px;width:22px;height:85px"></div>
<div class="a" style="left:1442px;top:409px;width:8px;height:50px;background:#6ff5e0"></div>
<div class="a" style="left:1306px;top:494px;width:152px;height:34px;background:#5fbfa8"></div>
<div class="a" style="left:1442px;top:459px;width:16px;height:35px;background:#5fbfa8"></div>
<div class="a" style="left:1442px;top:528px;width:16px;height:17px;background:#5fbfa8"></div>
<div class="a dot" style="left:1306px;top:477px;width:145px;height:17px;opacity:.6"></div>
<div class="a dot" style="left:1306px;top:528px;width:120px;height:17px;opacity:.6"></div>
<div class="a" style="left:1479px;top:450px;width:146px;height:138px;border:2px solid #5a2e0a"></div>
<div class="t w" style="left:1498px;top:441px;background:#2b200f">download</div>
<div class="t w" style="left:1484px;top:458px">▼ 685 Byte/s
▼ Top: (14.2 Mib)
▼ Total: 6.41 GiB

▲ 1.23 KiB/s
▲ Top: (260 Kibp)
▲ Total: 74.3 MiB</div>
<div class="t w" style="left:1498px;top:577px;background:#2b200f">upload</div>

<!-- cpu -->
<div class="box" style="left:1302px;top:655px;width:738px;height:290px"></div>
<div class="a dot" style="left:1306px;top:783px;width:399px;height:34px"></div>
<div class="a" style="left:1710px;top:705px;width:323px;height:188px;border:2px solid #5a2e0a"></div>
<div class="t w" style="left:1728px;top:696px;background:#2b200f">Ryzen 7 3700X</div>
<div class="t w" style="left:1963px;top:696px;background:#2b200f">2.2 GHz</div>
<div class="a" style="left:1747px;top:717px;width:96px;height:11px;background:repeating-linear-gradient(90deg,#4e2808 0 5px,transparent 5px 6px)"></div>
<div class="a dot" style="left:1938px;top:714px;width:40px;height:17px"></div>
<div class="a dotb" style="left:1746px;top:731px;width:40px;height:136px"></div>
<div class="a dotb" style="left:1907px;top:731px;width:40px;height:136px"></div>
<div class="a dot" style="left:1746px;top:731px;width:8px;height:17px"></div>
<div class="a dot" style="left:1907px;top:731px;width:8px;height:17px"></div>
<div class="a dot" style="left:1907px;top:765px;width:40px;height:17px"></div>
<div class="a dot" style="left:1755px;top:799px;width:16px;height:17px"></div>
<div class="a dot" style="left:1918px;top:799px;width:20px;height:34px"></div>
<div class="a dot" style="left:1746px;top:833px;width:8px;height:17px"></div>
<div class="a dot" style="left:1907px;top:850px;width:10px;height:17px"></div>
<div class="a" style="left:1871px;top:731px;width:2px;height:136px;background:#5a2e0a"></div>
<div class="t" style="left:1716px;top:714px;color:#c8d0c0">CPU                      <span class="gr">1%</span>        <span class="gr">44°C</span></div>
<div class="t" style="left:1716px;top:731px;color:#c8d0c0">C0         <span class="gr">1%</span>  <span class="gr">40°C</span> C8         <span class="gr">1%</span>  <span class="gr">40°C</span>
C1         <span class="gr">0%</span>  <span class="gr">40°C</span> C9         <span class="gr">1%</span>  <span class="gr">40°C</span>
C2         <span class="gr">0%</span>  <span class="gr">40°C</span> C10        <span class="gr">8%</span>  <span class="gr">40°C</span>
C3         <span class="gr">1%</span>  <span class="gr">40°C</span> C11        <span class="gr">0%</span>  <span class="gr">40°C</span>
C4         <span class="gr">0%</span>  <span class="gr">40°C</span> C12        <span class="gr">0%</span>  <span class="gr">40°C</span>
C5         <span class="gr">1%</span>  <span class="gr">40°C</span> C13        <span class="gr">1%</span>  <span class="gr">40°C</span>
C6         <span class="gr">1%</span>  <span class="gr">40°C</span> C14        <span class="gr">1%</span>  <span class="gr">40°C</span>
C7         <span class="gr">0%</span>  <span class="gr">40°C</span> C15        <span class="gr">1%</span>  <span class="gr">40°C</span>
                    LAV: 0.81 0.62 0.72</div>
<div class="t" style="left:1307px;top:919px;color:#4e2808">up 05:09:25</div>
<div class="t w" style="left:1310px;top:936px;background:#2b200f"><span class="dg">1</span>cpu</div>
<div class="t w" style="left:1355px;top:936px;background:#2b200f">menu</div>
<div class="t w" style="left:1387px;top:936px;background:#2b200f"><span class="dg">p</span>reset *</div>
<div class="t w" style="left:1527px;top:936px;background:#2b200f">23:59:11</div>
<div class="t w" style="left:1724px;top:936px;background:#2b200f"><span class="dg">-</span> 2000ms <span class="dg">+</span></div>
<div class="bar" style="left:1299px;top:953px;width:744px;background:#0b0a08">
 <div class="seg aq" style="left:0;width:100px;background:#4e2808;clip-path:polygon(0 0,100% 0,calc(100% - 8px) 100%,0 100%);padding-left:10px">TERMINAL</div>
 <div class="seg aq" style="left:114px">/bin/zsh</div>
 <div class="seg aq" style="left:640px;width:104px;background:#4e2808;clip-path:polygon(8px 0,100% 0,100% 100%,0 100%);padding-left:34px">:54/54≡</div>
</div>
<div class="t w" style="left:1958px;top:970px">i</div>
</body></html>
